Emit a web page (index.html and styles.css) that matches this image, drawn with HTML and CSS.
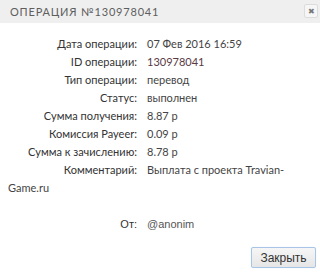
FILE: index.html
```html
<!DOCTYPE html>
<html lang="ru">
<head>
  <meta charset="UTF-8">
  <title>Операция №130978041</title>
  <link rel="stylesheet" href="styles.css">
</head>
<body>

  <div class="dialog">
    <div class="dialog-head">
      <span class="dialog-title">Операция №130978041</span>
      <span class="dialog-close">&#10006;</span>
    </div>

    <div class="dialog-body">
      <div class="row"><span class="label">Дата операции:</span><span class="value">07 Фев 2016 16:59</span></div>
      <div class="row"><span class="label">ID операции:</span><span class="value id">130978041</span></div>
      <div class="row"><span class="label">Тип операции:</span><span class="value">перевод</span></div>
      <div class="row"><span class="label">Статус:</span><span class="value">выполнен</span></div>
      <div class="row"><span class="label">Сумма получения:</span><span class="value">8.87 р</span></div>
      <div class="row"><span class="label">Комиссия Payeer:</span><span class="value">0.09 р</span></div>
      <div class="row"><span class="label">Сумма к зачислению:</span><span class="value">8.78 р</span></div>
      <div class="row"><span class="label">Комментарий:</span>Выплата с проекта Travian-Game.ru</div>

      <div class="row from"><span class="label">От:</span><span class="value plain">@anonim</span></div>
    </div>

    <div class="dialog-foot">
      <button class="close-btn">Закрыть</button>
    </div>
  </div>

</body>
</html>
```

FILE: styles.css
```css
* {
  margin: 0;
  padding: 0;
  box-sizing: border-box;
}

body {
  width: 320px;
  height: 274px;
  background: #fff;
  font-family: 'Lato', 'Liberation Sans', sans-serif;
  color: #333;
}

.dialog {
  width: 320px;
  height: 274px;
  display: flex;
  flex-direction: column;
}

.dialog-head {
  height: 23px;
  background: #efefef;
  display: flex;
  align-items: center;
  justify-content: space-between;
  padding: 0 2px 1px 10px;
}

.dialog-title {
  font-size: 11px;
  letter-spacing: 0.8px;
  text-transform: uppercase;
  color: #5e5e5e;
}

.dialog-close {
  width: 14px;
  height: 14px;
  border: 1px solid #dcdcdc;
  background: #f6f6f6;
  border-radius: 2px;
  font-size: 8px;
  line-height: 12px;
  text-align: center;
  color: #777;
}

.dialog-body {
  padding: 12px 8px 0 8px;
  font-size: 11px;
  line-height: 18px;
}

.row {
  color: #444;
}

.label {
  display: inline-block;
  width: 139px;
  padding-right: 10px;
  text-align: right;
  color: #333;
}

.value.id {
  color: #5a3a44;
}

.row.from {
  margin-top: 18px;
}

.value.plain {
  font-family: 'Liberation Sans', sans-serif;
  color: #555;
}

.row.from .label {
  font-family: 'Liberation Sans', sans-serif;
}

.dialog-foot {
  flex: 1;
  display: flex;
  justify-content: flex-end;
  align-items: flex-end;
  padding: 0 4px 6px 0;
}

.close-btn {
  width: 65px;
  height: 21px;
  font-family: 'Liberation Sans', sans-serif;
  font-size: 12px;
  color: #333;
  background: linear-gradient(#f6f6f6, #e6e6e6);
  border: 1px solid #a8c4e6;
  border-radius: 2px;
  box-shadow: 0 0 1px #c6dbf3;
}
```
